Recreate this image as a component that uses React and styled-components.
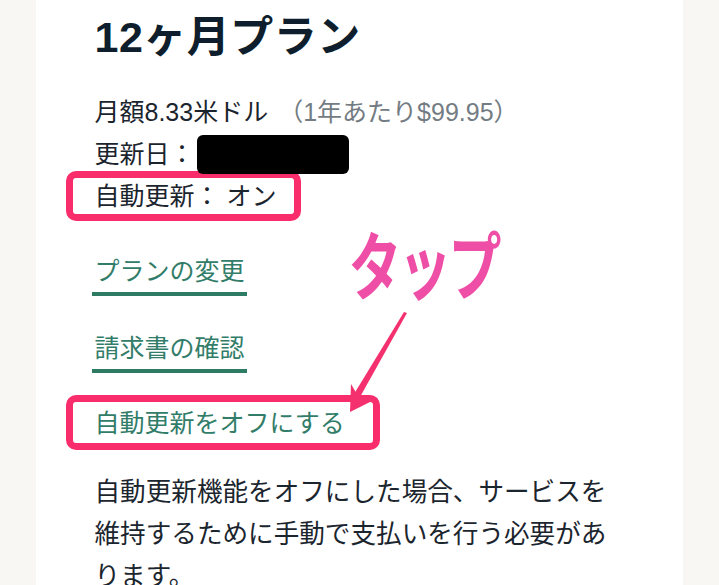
import React from 'react'
import styled, { createGlobalStyle } from 'styled-components'

const GlobalStyle = createGlobalStyle`
  html, body {
    margin: 0;
    padding: 0;
    background: #f8f7f3;
  }
  body {
    font-family: "Liberation Sans", "Noto Sans CJK JP", sans-serif;
  }
`

const Page = styled.div`
  width: 719px;
  height: 585px;
  overflow: hidden;
  display: flex;
  justify-content: center;
`

const Card = styled.div`
  position: relative;
  width: 647px;
  margin-left: -1px;
  background: #ffffff;
  padding: 9px 0 0 59px;
  box-sizing: border-box;
  color: #1b252e;
`

const Title = styled.h1`
  margin: 0;
  font-size: 43px;
  line-height: 56px;
  font-weight: 700;
  color: #0e1e2c;
  letter-spacing: 0.5px;
`

const Info = styled.div`
  margin-top: 26px;
  font-size: 25px;
  line-height: 42px;
`

const InfoRow = styled.div`
  display: flex;
  align-items: center;
  height: 42px;
`

const Muted = styled.span`
  color: #747c83;
  margin-left: 10px;
`

const Redacted = styled.span`
  display: inline-block;
  width: 152px;
  height: 39px;
  margin-left: 2px;
  background: #000;
  border-radius: 6px;
`

const Highlight = styled.div`
  display: flex;
  align-items: center;
  width: fit-content;
  height: ${(p) => p.h}px;
  margin: ${(p) => p.m};
  padding: 0 ${(p) => p.pr}px 0 22px;
  border: 7px solid #fa2d6c;
  border-radius: 10px;
  box-sizing: border-box;
`

const Links = styled.div`
  margin-top: 39px;
  display: flex;
  flex-direction: column;
  align-items: flex-start;
  gap: 37px;
`

const UnderLink = styled.a`
  display: inline-block;
  font-size: 25px;
  line-height: 30px;
  color: #327d69;
  text-decoration: none;
  padding: 0 2px 6px 3px;
  margin-left: -3px;
  border-bottom: 4px solid #2e7b63;
`

const PlainLink = styled.a`
  font-size: 25px;
  line-height: 30px;
  color: #327d69;
  text-decoration: none;
`

const Note = styled.p`
  margin: 21px 0 0;
  width: 528px;
  font-size: 25.6px;
  line-height: 42px;
  color: #1b252e;
  line-break: anywhere;
`

const TapLabel = styled.div`
  position: absolute;
  left: 313px;
  top: 220px;
  font-family: "Noto Sans CJK JP", sans-serif;
  font-size: 53px;
  font-weight: 700;
  line-height: 60px;
  letter-spacing: -3px;
  color: #ef4ea6;
  transform: scaleY(1.4);
  transform-origin: top left;
`

const Arrow = styled.svg`
  position: absolute;
  left: 300px;
  top: 300px;
  overflow: visible;
`

const App = () => {
  return (
    <>
      <GlobalStyle />
      <Page>
        <Card>
          <Title>12ヶ月プラン</Title>

          <Info>
            <InfoRow>
              月額8.33米ドル<Muted>（1年あたり$99.95）</Muted>
            </InfoRow>
            <InfoRow>
              更新日：<Redacted />
            </InfoRow>
            <Highlight h={50} m="-4px 0 -4px -29px" pr={18}>
              自動更新： オン
            </Highlight>
          </Info>

          <Links>
            <UnderLink href="#">プランの変更</UnderLink>
            <UnderLink href="#">請求書の確認</UnderLink>
          </Links>

          <Highlight h={55} m="22px 0 0 -29px" pr={28}>
            <PlainLink href="#">自動更新をオフにする</PlainLink>
          </Highlight>

          <Note>
            自動更新機能をオフにした場合、サービスを維持するために手動で支払いを行う必要があります。
          </Note>

          <TapLabel>タップ</TapLabel>
          <Arrow width="80" height="120" viewBox="0 0 80 120">
            <path d="M71 13 L68 12 L18 94 L24 97 Z" fill="#f4306e" />
            <path d="M14 112 L15 84 L22 96 L42 98 Z" fill="#f4306e" />
          </Arrow>
        </Card>
      </Page>
    </>
  )
}

export default App
